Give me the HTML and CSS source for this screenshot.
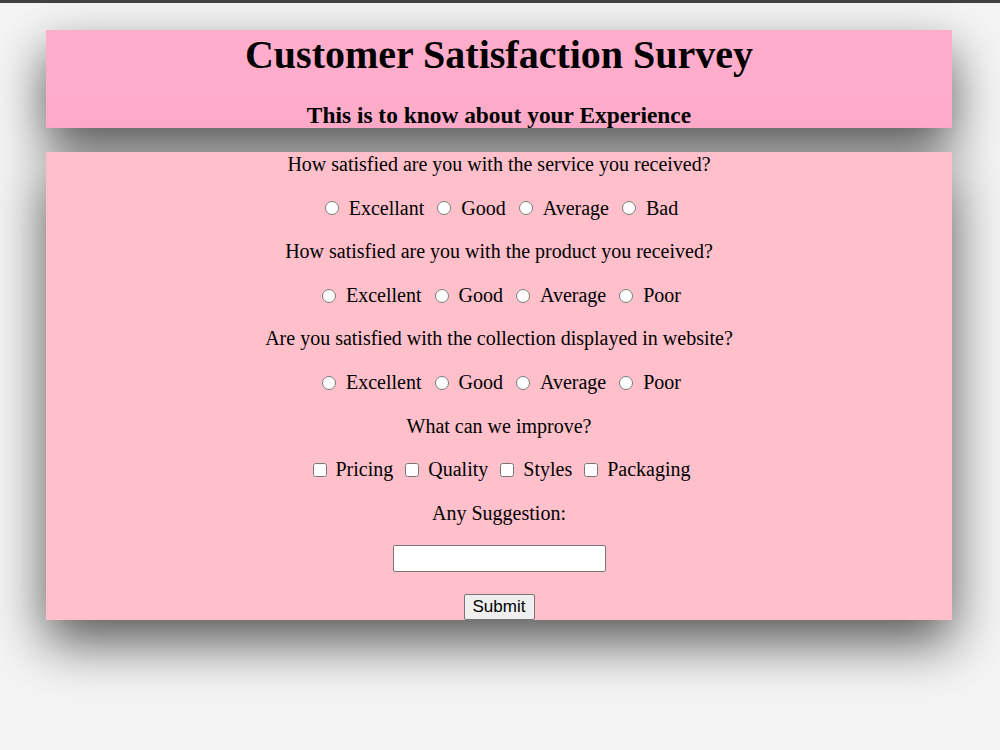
FILE: index.html
```html
<!DOCTYPE html>
<html lang="en">
<head>
    <meta charset="UTF-8">
    <meta name="viewport" content="width=device-width, initial-scale=1.0">
    <title>Customer Satisfaction Survey</title>
    <link rel="stylesheet" href="styles.css">
</head>
<body>

    <div class="page">
        <!-- Heading block -->
        <div class="header">
            <h1>Customer Satisfaction Survey</h1>
            <h3>This is to know about your Experience</h3>
        </div>

        <!-- Survey form -->
        <form class="survey" onsubmit="return false">
            <p class="question">How satisfied are you with the service you received?</p>
            <div class="choices">
                <label class="choice"><input type="radio" name="service"> Excellant</label>
                <label class="choice"><input type="radio" name="service"> Good</label>
                <label class="choice"><input type="radio" name="service"> Average</label>
                <label class="choice"><input type="radio" name="service"> Bad</label>
            </div>

            <p class="question">How satisfied are you with the product you received?</p>
            <div class="choices">
                <label class="choice"><input type="radio" name="product"> Excellent</label>
                <label class="choice"><input type="radio" name="product"> Good</label>
                <label class="choice"><input type="radio" name="product"> Average</label>
                <label class="choice"><input type="radio" name="product"> Poor</label>
            </div>

            <p class="question">Are you satisfied with the collection displayed in website?</p>
            <div class="choices">
                <label class="choice"><input type="radio" name="collection"> Excellent</label>
                <label class="choice"><input type="radio" name="collection"> Good</label>
                <label class="choice"><input type="radio" name="collection"> Average</label>
                <label class="choice"><input type="radio" name="collection"> Poor</label>
            </div>

            <p class="question">What can we improve?</p>
            <div class="choices checks">
                <label class="choice"><input type="checkbox" name="improve"> Pricing</label>
                <label class="choice"><input type="checkbox" name="improve"> Quality</label>
                <label class="choice"><input type="checkbox" name="improve"> Styles</label>
                <label class="choice"><input type="checkbox" name="improve"> Packaging</label>
            </div>

            <p class="question">Any Suggestion:</p>
            <div class="field">
                <input type="text" class="suggestion" name="suggestion">
            </div>
            <div class="field last">
                <button type="submit">Submit</button>
            </div>
        </form>
    </div>

</body>
</html>
```

FILE: styles.css
```css
body {
    font-family: "Liberation Serif", "Times New Roman", serif;
    font-size: 20px;
    background-color: #f4f4f4; /* Light gray background */
    border-top: 3px solid #404040;
    margin: 0;
    padding: 0;
    min-height: 747px;
}

.page {
    width: 906px;
    margin: 27px 0 0 46px;
    padding-bottom: 130px;
}

.header,
.survey {
    box-shadow: 0 22px 50px rgba(0, 0, 0, 0.65);
}

.header {
    background-color: #ffadcb; /* Hot pink */
    text-align: center;
}

.header h1 {
    font-size: 40px;
    line-height: 46px;
    margin: 0;
    padding: 2px 0 24px;
}

.header h3 {
    font-size: 23.4px;
    line-height: 26px;
    margin: 0;
}

.survey {
    background-color: #ffc0cb; /* Light pink */
    margin-top: 24px;
    padding-top: 1px;
    text-align: center;
}

.question {
    margin: 0 0 20px;
    line-height: 23.6px;
}

.choices {
    display: flex;
    justify-content: center;
    align-items: center;
    gap: 8px;
    height: 23.6px;
    margin-bottom: 20px;
}

.choice {
    display: flex;
    align-items: center;
    gap: 10px;
}

.choice input {
    margin: 0 0 0 5px;
    width: 14px;
    height: 14px;
}

.checks {
    gap: 7px;
}

.checks .choice {
    gap: 9px;
}

.field {
    display: flex;
    justify-content: center;
    margin-bottom: 22px;
}

.field.last {
    margin-bottom: 0;
}

.suggestion {
    width: 213px;
    height: 27px;
    box-sizing: border-box;
    border: 1px solid #767676;
    border-radius: 2px;
    background-color: #fff;
}

button {
    width: 71px;
    height: 26px;
    box-sizing: border-box;
    padding: 0;
    font-family: "Liberation Sans", Arial, sans-serif;
    font-size: 17px;
    color: #000;
    background-color: #efefef;
    border: 1px solid #767676;
    border-radius: 2px;
}
```
